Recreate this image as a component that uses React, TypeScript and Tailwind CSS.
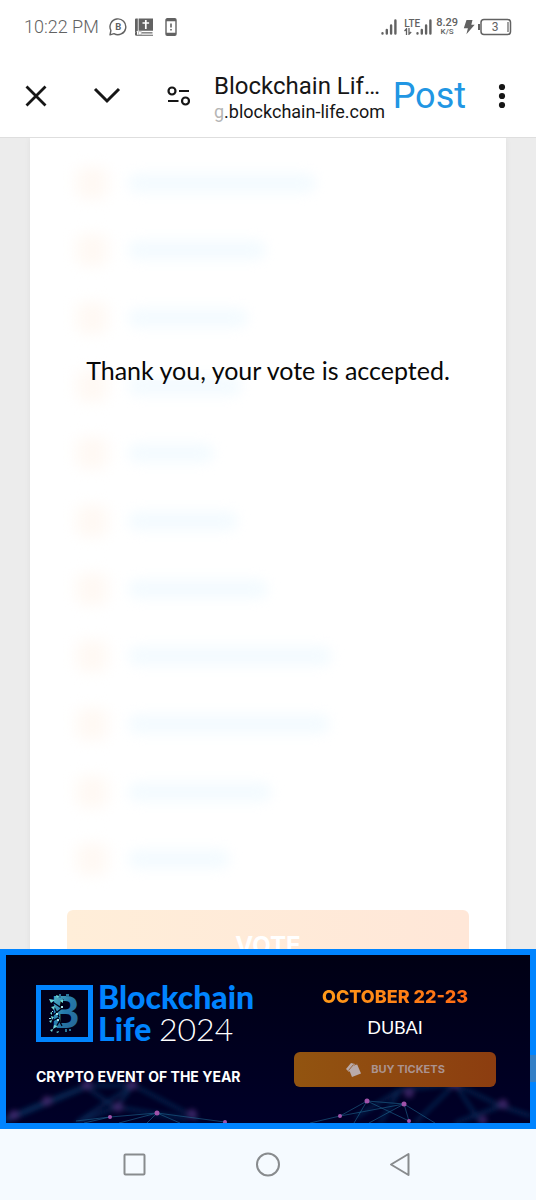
interface VoteOption {
  id: string;
  bar: string;
}

const options: VoteOption[] = [
  { id: "option-1", bar: "w-[188px]" },
  { id: "option-2", bar: "w-[138px]" },
  { id: "option-3", bar: "w-[120px]" },
  { id: "option-4", bar: "w-[114px]" },
  { id: "option-5", bar: "w-[86px]" },
  { id: "option-6", bar: "w-[110px]" },
  { id: "option-7", bar: "w-[140px]" },
  { id: "option-8", bar: "w-[204px]" },
  { id: "option-9", bar: "w-[202px]" },
  { id: "option-10", bar: "w-[144px]" },
  { id: "option-11", bar: "w-[102px]" },
];

function SignalIcon() {
  return (
    <svg width="16" height="16" viewBox="0 0 16 16" stroke="currentColor" strokeWidth="2.4" strokeLinecap="round">
      <path d="M1.5 14.3v.2M5.8 11v3.5M10.1 6.5v8M14.4 1.5v13" />
    </svg>
  );
}

function StatusBar() {
  return (
    <div className="flex h-[54px] items-center justify-between px-6 text-[#626262]">
      <div className="flex items-center">
        <span className="text-lg font-light">10:22 PM</span>
        {/* Chat bubble */}
        <svg className="ml-[10px]" width="18" height="18" viewBox="0 0 18 18" fill="none" stroke="currentColor" strokeWidth="1.4">
          <path d="M1 16.8L1.9 12.5A7.9 7.9 0 1 1 5 15.7Z" strokeLinejoin="round" />
          <text x="9.2" y="12.4" textAnchor="middle" fontSize="9.5" fontWeight="700" fill="currentColor" stroke="none">
            B
          </text>
        </svg>
        {/* Bible */}
        <svg className="ml-2" width="18" height="18" viewBox="0 0 18 18">
          <path d="M0 1.5Q0 .5 1 .5h1.8v12.3L0 14.5zM3.6.5H18v12.3H3.6z" fill="#626262" />
          <path d="M0 14.5l2-1v3.3H18v.9H1.5Q0 17.7 0 16.5z" fill="#626262" />
          <path d="M6.5 14.8H17.5" stroke="#8a8a8a" strokeWidth="1.6" />
          <path d="M10.8 2v9M7.5 5h6.6" stroke="#fff" strokeWidth="1.7" />
          <path d="M3.5 13.6h2.8v3H3.5z" fill="#fff" stroke="#777" strokeWidth=".4" />
        </svg>
        {/* Phone alert */}
        <svg className="ml-3" width="12" height="18" viewBox="0 0 12 18" fill="none">
          <rect x="1" y=".8" width="10" height="16.4" rx="1.2" stroke="currentColor" strokeWidth="1.4" />
          <path d="M1 2.2h10M1 15.8h10" stroke="currentColor" strokeWidth="2.2" />
          <path d="M6 5.5v4M6 11v1.6" stroke="currentColor" strokeWidth="1.6" />
        </svg>
      </div>

      <div className="flex items-center">
        <SignalIcon />
        <div className="ml-[7px] flex items-end">
          <div className="-mr-1 flex flex-col items-start">
            <span className="text-[10px] leading-[9px] font-medium">LTE</span>
            <svg width="8" height="7" viewBox="0 0 8 7" fill="none" stroke="currentColor" strokeWidth="1.3">
              <path d="M2.5 7V.8L.5 3M5 0v6.2L7.2 4" />
            </svg>
          </div>
          <SignalIcon />
        </div>
        <div className="ml-1 flex flex-col items-center">
          <span className="text-[11px] leading-[10px] font-medium">8.29</span>
          <span className="text-[8px] leading-[8px] font-medium">K/S</span>
        </div>
        <svg className="ml-[5px]" width="12" height="16" viewBox="0 0 12 16" fill="currentColor">
          <path d="M3.5 1h6L8.3 5.7h3.4L3.4 15.2l1.5-6H.8z" />
        </svg>
        <svg className="ml-[3px]" width="34" height="18" viewBox="0 0 34 18" fill="none" stroke="currentColor">
          <rect x="3" y="1.5" width="29.5" height="15" rx="3" strokeWidth="1.5" />
          <path d="M1 6v6" strokeWidth="2" />
          <path d="M30 4v10" strokeWidth="1.2" />
          <text x="17" y="13.2" textAnchor="middle" fontSize="12" fill="currentColor" stroke="none">
            3
          </text>
        </svg>
      </div>
    </div>
  );
}

function Toolbar() {
  return (
    <div className="flex h-[83px] items-center pr-[29px] pl-6 text-[#161616]">
      <button aria-label="Close" className="shrink-0">
        <svg width="24" height="24" viewBox="0 0 24 24" stroke="currentColor" strokeWidth="2.8">
          <path d="M2.5 2.5l19 19M21.5 2.5l-19 19" />
        </svg>
      </button>
      <button aria-label="Minimise" className="ml-[45px] shrink-0">
        <svg width="28" height="24" viewBox="0 0 28 24" fill="none" stroke="currentColor" strokeWidth="3">
          <path d="M2 5l12 12L26 5" />
        </svg>
      </button>
      <button aria-label="Site settings" className="ml-[45px] shrink-0">
        <svg width="24" height="24" viewBox="0 0 24 24" fill="none" stroke="currentColor" strokeWidth="2.2">
          <circle cx="6" cy="7" r="3.5" />
          <path d="M13 7h10M2 17h10.5" />
          <circle cx="19.5" cy="17" r="3.5" />
        </svg>
      </button>
      <div className="ml-6 min-w-0 flex-1 pt-1">
        <p className="text-2xl leading-7 whitespace-nowrap">Blockchain Lif…</p>
        <p className="text-lg leading-6 whitespace-nowrap">
          <span className="text-[#b5b5b5]">g</span>.blockchain-life.com
        </p>
      </div>
      <button className="ml-2 shrink-0 text-4xl leading-none text-[#2196e3]">Post</button>
      <button aria-label="More" className="ml-[31px] shrink-0">
        <svg width="10" height="26" viewBox="0 0 10 26" fill="currentColor">
          <circle cx="5" cy="4" r="3.1" />
          <circle cx="5" cy="13" r="3.1" />
          <circle cx="5" cy="22" r="3.1" />
        </svg>
      </button>
    </div>
  );
}

function VoteForm() {
  return (
    <main className="relative min-h-0 flex-1 overflow-hidden bg-[#ececec] px-[30px]">
      <form className="min-h-full bg-white px-[37px] pt-[11px] shadow-[0_0_6px_rgba(0,0,0,0.06)]">
        <ul className="grid h-[744px] auto-rows-fr">
          {options.map((option) => (
            <li key={option.id} className="flex">
              <label className="flex items-center gap-5 pl-[9px]">
                <input
                  type="radio"
                  name="vote"
                  aria-label={option.id}
                  className="size-8 appearance-none rounded-lg bg-[#fff9f4] blur-[7px]"
                />
                <span className={`h-5 rounded-full bg-[#f4fbff] blur-[6px] ${option.bar}`} />
              </label>
            </li>
          ))}
        </ul>
        <button
          type="button"
          className="mt-[17px] h-[72px] w-full rounded-md bg-linear-to-r from-[#ffeed9] to-[#ffe7d8] font-['Inter',sans-serif] text-2xl font-bold text-white"
        >
          VOTE
        </button>
      </form>

      {/* Confirmation shown over the faded form */}
      <div role="status" className="absolute inset-0 flex items-start justify-center pt-[216px]">
        <p className="font-['Lato',sans-serif] text-[25px] leading-8 whitespace-nowrap text-[#080808]">
          Thank you, your vote is accepted.
        </p>
      </div>
    </main>
  );
}

function BitcoinMark() {
  return (
    <svg className="size-[57px] shrink-0" viewBox="0 0 57 57">
      <defs>
        <linearGradient id="coin" x1="0" y1="0" x2="1" y2="1">
          <stop offset="0" stopColor="#63c6cc" />
          <stop offset=".5" stopColor="#2479aa" />
          <stop offset="1" stopColor="#285e92" />
        </linearGradient>
      </defs>
      <rect x="2.5" y="2.5" width="52" height="52" fill="none" stroke="#0084ff" strokeWidth="5" />
      <text x="29" y="43" textAnchor="middle" fontSize="43" fontWeight="900" fontFamily="Lato" fill="url(#coin)">
        B
      </text>
      <path d="M23 9h2v4h-2zM30 9h3v3h-3zM29 44h2v3h-2zM33 44h2v2h-2z" fill="#2a7598" />
      {/* Shattered left side */}
      <path
        d="M15 16l9 6 3-8M16 31l9-7M15 37l7-4 4 8M19 44l5-9M17 20l6 12"
        fill="none"
        stroke="#000018"
        strokeWidth="1.3"
      />
      <path
        d="M13 14l6 1-4 3zM20 10l3 1-2 2zM15 22l4-1-1 4zM14 28l2-1v3zM15 31l3 1-2 3zM13 36l3-1-1 3zM18 40l4 1-5 3zM14 45l3-1-1 3zM24 16l3-2v4zM20 47l3-1-1 2z"
        fill="#70dad9"
      />
      <path d="M16 26h1v1h-1zM13 33h2v1h-2zM21 34h2v2h-2zM20 28h2v2h-2zM25 21h2v2h-2z" fill="#a4e3ea" />
    </svg>
  );
}

function NetworkBackdrop() {
  return (
    <svg className="absolute inset-x-0 bottom-0 h-[48px] w-full" viewBox="0 0 524 48" preserveAspectRatio="none" fill="none">
      <defs>
        <filter id="soft" x="-10%" y="-30%" width="120%" height="160%">
          <feGaussianBlur stdDeviation="2.6" />
        </filter>
      </defs>
      <g filter="url(#soft)" opacity=".6">
        <path
          d="M0 43L41 26l38-15 48-1 65 34M41 26L8 40 79 11l31 22L127 10 70 48 111 32l70 12M-5 48l84-35M350 42l44-27 55-6 46 22 30 10M394 15l-20 33M449 9l-40 39M449 9l26 39M495 31l-46 17"
          stroke="#15598e"
          strokeWidth="3"
          opacity=".75"
        />
        <g fill="#70439b" opacity=".8">
          <circle cx="8" cy="40" r="5" />
          <circle cx="41" cy="26" r="5" />
          <circle cx="81" cy="10" r="5" />
          <circle cx="126" cy="10" r="5" />
          <circle cx="112" cy="32" r="5" />
          <circle cx="186" cy="39" r="5" />
          <circle cx="403" cy="18" r="5" />
          <circle cx="449" cy="9" r="5" />
          <circle cx="497" cy="29" r="5" />
          <circle cx="477" cy="45" r="4" />
        </g>
      </g>
      <g stroke="#216f98" strokeWidth="1" opacity=".55">
        <path d="M70 46l34-4 47-4 68 9M104 42l-26 6M151 38l-38 10M151 38l-10 10M151 38l23 10M304 48l30-7 27-15 37 3 31 19M334 41l64-12M361 26l-13 22M361 26l42 20M398 29l-35 19M398 29l5 17" />
      </g>
      <g fill="#a052aa">
        <circle cx="104" cy="42" r="2" />
        <circle cx="151" cy="38" r="2.5" />
        <circle cx="219" cy="47" r="2" />
        <circle cx="334" cy="41" r="2" />
        <circle cx="361" cy="26" r="2.5" />
        <circle cx="398" cy="29" r="2.5" />
        <circle cx="403" cy="46" r="2" />
      </g>
    </svg>
  );
}

function EventBanner() {
  return (
    <section className="relative border-6 border-[#0084ff] bg-linear-to-b from-[#000014] to-[#000028] font-['Inter',sans-serif] text-white">
      <NetworkBackdrop />
      <div className="relative flex h-[168px] justify-between pr-[34px] pl-[30px]">
        <div className="pt-[26px]">
          <div className="flex items-center gap-[5px]">
            <BitcoinMark />
            <h1 className="font-['Lato',sans-serif] text-[32px] leading-8 font-black whitespace-nowrap text-[#0084ff]">
              Blockchain
              <br />
              Life <span className="font-light text-white">2024</span>
            </h1>
          </div>
          <p className="mt-5 text-sm leading-6 font-bold whitespace-nowrap">CRYPTO EVENT OF THE YEAR</p>
        </div>

        <div className="flex w-[202px] flex-col items-center pt-[30px]">
          <p className="bg-linear-to-r from-[#ff9a19] to-[#ff6a13] bg-clip-text text-lg leading-6 font-extrabold whitespace-nowrap text-transparent">
            OCTOBER 22-23
          </p>
          <p className="mt-2 font-['Lato',sans-serif] text-lg leading-5">DUBAI</p>
          <button className="mt-[15px] flex h-[35px] w-full items-center justify-center gap-2 rounded-md bg-linear-to-r from-[#925410] to-[#8c3d10] text-[11px] font-bold text-[#ab938f]">
            <svg width="18" height="16" viewBox="0 0 18 16">
              <path d="M1 7l5-6 4 1-6 8z" fill="#b9aaa9" />
              <path d="M3.500 6.500L12 2l4 9.500-9 3.500z" fill="#b9aaa9" />
              <path d="M3.5 8.5l5-6M11 3l1-2 1 2" stroke="#8e5322" strokeWidth=".8" fill="none" />
            </svg>
            BUY TICKETS
          </button>
        </div>
      </div>
      {/* Page scroll thumb */}
      <div className="absolute top-[100px] -right-[6px] h-[27px] w-[6px] bg-[#337fc6]" />
    </section>
  );
}

function SystemNav() {
  return (
    <nav className="flex h-[71px] items-center justify-center gap-[107px] bg-[#f5faff] text-[#888b8e]">
      <button aria-label="Recent apps">
        <svg width="26" height="26" viewBox="0 0 26 26" fill="none" stroke="currentColor" strokeWidth="2">
          <rect x="2.5" y="2.5" width="20" height="20" rx="1" />
        </svg>
      </button>
      <button aria-label="Home">
        <svg width="26" height="26" viewBox="0 0 26 26" fill="none" stroke="currentColor" strokeWidth="2">
          <circle cx="13" cy="12.5" r="11" />
        </svg>
      </button>
      <button aria-label="Back">
        <svg width="26" height="26" viewBox="0 0 26 26" fill="none" stroke="currentColor" strokeWidth="2" strokeLinejoin="round">
          <path d="M20.5 2v21L3 12.5z" />
        </svg>
      </button>
    </nav>
  );
}

export default function App() {
  return (
    <div className="flex h-screen flex-col bg-white font-['Roboto',sans-serif]">
      <header className="border-b border-[#dedede]">
        <StatusBar />
        <Toolbar />
      </header>
      <VoteForm />
      <EventBanner />
      <SystemNav />
    </div>
  );
}
